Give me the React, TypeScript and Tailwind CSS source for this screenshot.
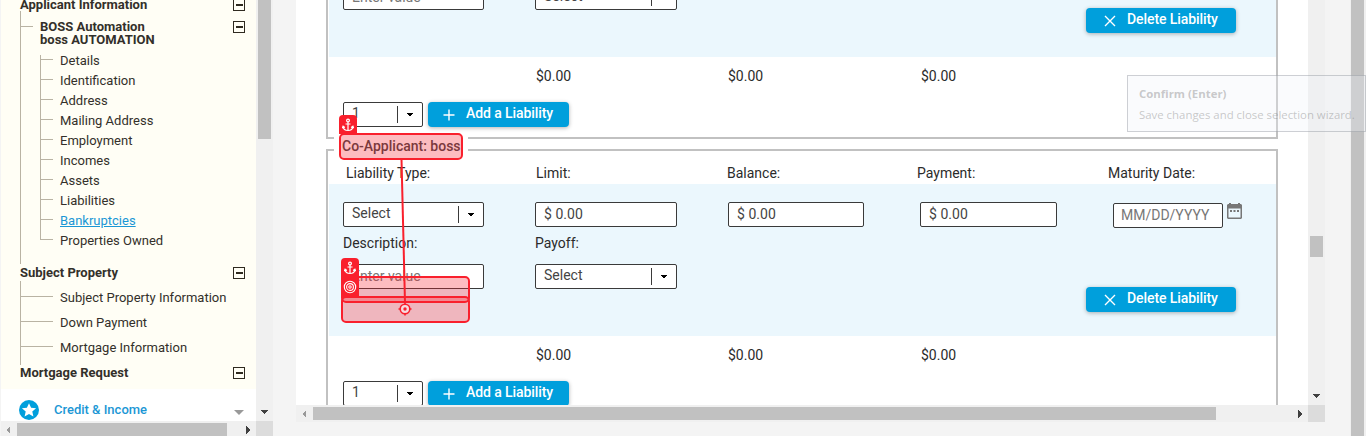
import React from "react";

const applicantLinks = [
  "Details",
  "Identification",
  "Address",
  "Mailing Address",
  "Employment",
  "Incomes",
  "Assets",
  "Liabilities",
  "Bankruptcies",
  "Properties Owned",
];

const propertyLinks = ["Subject Property Information", "Down Payment", "Mortgage Information"];

function CollapseBox() {
  return (
    <span className="flex h-3 w-3 shrink-0 items-center justify-center border border-[#2f2a20] bg-[#fffef5]">
      <span className="h-[2px] w-[7px] bg-[#2f2a20]" />
    </span>
  );
}

function Arrow({ dir, className }: { dir: "left" | "right" | "down"; className: string }) {
  const points = { left: "5,0 5,8 1,4", right: "1,0 1,8 5,4", down: "0,1 8,1 4,5" }[dir];
  const down = dir === "down";
  return (
    <svg width={down ? 8 : 6} height={down ? 6 : 8} className={"shrink-0 " + className} shapeRendering="crispEdges">
      <polygon points={points} fill="currentColor" />
    </svg>
  );
}

function Sidebar() {
  return (
    <aside className="ml-px flex h-[436px] w-[272px] shrink-0 flex-col">
      <div className="flex h-[421px]">
        <div className="flex w-[255px] flex-col bg-white text-[13px] leading-[13px] text-[#33302a]">
          <nav className="h-[389px] bg-[#fffef5] pl-[19px]">
            <div className="flex h-[11px] items-end justify-between pr-[11px] font-bold">
              <span>Applicant Information</span>
              <CollapseBox />
            </div>
            <div className="h-[253px] border-l border-[#b9b3a3]">
              <div className="flex h-[44px] justify-between pr-[11px] pt-[10px]">
                <div className="flex">
                  <span className="mt-[5px] h-px w-3 bg-[#b9b3a3]" />
                  <div className="-mt-px ml-[7px] font-bold">
                    BOSS Automation
                    <br />
                    boss AUTOMATION
                  </div>
                </div>
                <CollapseBox />
              </div>
              <div className="flex">
                <div className="ml-[19px] h-[185px] w-px bg-[#b9b3a3]" />
                <ul className="-mt-[4px]">
                  {applicantLinks.map((t) => (
                    <li key={t} className="flex h-5 items-start">
                      <span className="mt-2 h-px w-3 bg-[#b9b3a3]" />
                      <a
                        className={
                          t === "Bankruptcies"
                            ? "ml-[7px] mt-[3px] text-[#1b97d5] underline"
                            : "ml-[7px] mt-[3px]"
                        }
                      >
                        {t}
                      </a>
                    </li>
                  ))}
                </ul>
              </div>
            </div>
            <div className="flex h-[17px] items-center justify-between pr-[11px] font-bold">
              <span>Subject Property</span>
              <CollapseBox />
            </div>
            <ul className="h-[84px] border-l border-[#b9b3a3] pt-[3px]">
              {propertyLinks.map((t) => (
                <li key={t} className="flex h-[25px] items-center">
                  <span className="h-px w-8 bg-[#b9b3a3]" />
                  <a className="ml-[7px] mt-px">{t}</a>
                </li>
              ))}
            </ul>
            <div className="flex h-4 items-center justify-between pr-[11px] font-bold">
              <span className="-mt-[2px]">Mortgage Request</span>
              <CollapseBox />
            </div>
          </nav>
          <div className="flex h-8 items-center pl-[18px] pr-3 pt-[9px] font-medium text-[#1b97d5]">
            <svg width="20" height="20" viewBox="0 0 20 20">
              <circle cx="10" cy="10" r="10" fill="#009fdc" />
              <path
                d="M10 3.200l2.100 4.600 5 .5-3.800 3.300 1.100 4.900-4.400-2.600-4.400 2.600 1.100-4.900-3.800-3.300 5-.5z"
                fill="#fff"
              />
            </svg>
            <span className="ml-[15px] grow">Credit &amp; Income</span>
            <svg width="10" height="5" className="mt-[5px]">
              <polygon points="0,0 10,0 5,5" fill="#999" />
            </svg>
          </div>
        </div>
        <div className="flex w-[17px] flex-col items-start justify-between bg-[#f0f0f0]">
          <div className="ml-[2px] h-[139px] w-[13px] bg-[#c1c1c1]" />
          <Arrow dir="down" className="mb-[6px] ml-1 text-[#404040]" />
        </div>
      </div>
      <div className="flex h-[15px] bg-[#f0f0f0]">
        <div className="flex w-[255px] items-center">
          <Arrow dir="left" className="ml-1 mt-[2px] text-[#999]" />
          <div className="ml-[6px] mt-[2px] h-[13px] w-[210px] bg-[#c1c1c1]" />
          <Arrow dir="right" className="ml-[18px] mt-[2px] text-[#404040]" />
        </div>
        <div className="w-[17px] bg-[#dcdcdc]" />
      </div>
    </aside>
  );
}

function SelectBox({ value, className }: { value: string; className: string }) {
  return (
    <div className={"flex h-[25px] shrink-0 items-center rounded-[2px] border border-[#3a3a3a] bg-white text-[#444] " + className}>
      <span className="-mt-[3px] ml-2 grow">{value}</span>
      <span className="h-[17px] w-px bg-[#3a3a3a]" />
      <svg width="6" height="4" className="ml-[9px] mr-[9px] mt-px" shapeRendering="crispEdges">
        <polygon points="0,0 6,0 3,4" fill="#000" />
      </svg>
    </div>
  );
}

function MoneyBox({ className }: { className: string }) {
  return (
    <div className={"flex h-[25px] shrink-0 items-center rounded-[2px] border border-[#3a3a3a] bg-white pl-2 text-[#444] " + className}>
      <span className="-mt-[2px] tracking-[0.05px]">$ 0.00</span>
    </div>
  );
}

function BlueButton({ kind, label, className }: { kind: "plus" | "cross"; label: string; className: string }) {
  return (
    <button className={"flex h-[25px] shrink-0 items-center rounded-[4px] bg-[#009fdc] font-medium text-white shadow-[0_1px_4px_rgba(0,0,0,0.3)] " + className}>
      <svg width="12" height="12" className="mt-px shrink-0" stroke="#fff" strokeWidth="1.4">
        <path d={kind === "plus" ? "M6 .5v11M.5 6h11" : "M1 1l10 10M11 1L1 11"} />
      </svg>
      <span className="-mt-[4px] ml-[11px] whitespace-nowrap tracking-[-0.08px]">{label}</span>
    </button>
  );
}

function LiabilitySection() {
  return (
    <section className="ml-[30px] h-[269px] w-[952px] shrink-0 border-2 border-[#c1c1c1] pl-px">
      <div className="flex h-[33px] items-center pl-[17px] pt-[11px] text-[#2b2b2b]">
        <span className="w-[190px]">Liability Type:</span>
        <span className="w-[191px]">Limit:</span>
        <span className="w-[190px]">Balance:</span>
        <span className="w-[191px]">Payment:</span>
        <span>Maturity Date:</span>
      </div>
      <div className="h-[152px] bg-[#ebf7fd] pl-[14px] pt-[18px]">
        <div className="flex">
          <SelectBox value="Select" className="w-[141px]" />
          <MoneyBox className="ml-[51px] w-[142px]" />
          <MoneyBox className="ml-[51px] w-[136px]" />
          <MoneyBox className="ml-[56px] w-[137px]" />
          <div className="ml-[56px] mt-px flex h-[25px] w-[110px] items-center rounded-[2px] border border-[#3a3a3a] bg-white pl-[7px] text-[#777]">
            <span className="-mt-px">MM/DD/YYYY</span>
          </div>
          <svg width="15" height="16" viewBox="0 0 15 16" className="ml-1 mt-px">
            <path
              d="M2 0h2v1h7V0h2v1h1l1 1v13l-1 1H1l-1-1V2l1-1h1zM1.500 5.500v9h12v-9z"
              fillRule="evenodd"
              fill="#777"
            />
            <path d="M3 7h2v2H3zM6.500 7h2v2h-2zM10 7h2v2h-2z" fill="#777" />
          </svg>
        </div>
        <div className="flex h-[36px] items-center pb-[6px] text-[#2b2b2b]">
          <span className="w-[192px]">Description:</span>
          <span>Payoff:</span>
        </div>
        <div className="flex">
          <div className="flex h-[25px] w-[141px] items-center rounded-[2px] border border-[#3a3a3a] bg-white pl-2 text-[#777]">
            <span className="-mt-[2px]">Enter value</span>
          </div>
          <SelectBox value="Select" className="ml-[51px] w-[142px]" />
          <BlueButton kind="cross" label="Delete Liability" className="ml-[409px] mt-[23px] w-[150px] pl-[18px]" />
        </div>
      </div>
      <div className="flex h-[45px] items-center pb-[8px] pl-[207px] text-[#2b2b2b]">
        <span className="w-[192px]">$0.00</span>
        <span className="w-[193px]">$0.00</span>
        <span>$0.00</span>
      </div>
      <div className="flex pl-[14px]">
        <SelectBox value="1" className="w-[80px]" />
        <BlueButton kind="plus" label="Add a Liability" className="ml-[5px] w-[141px] pl-[15px]" />
      </div>
    </section>
  );
}

function AnchorBadge({ className }: { className: string }) {
  return (
    <div className={"absolute flex h-[19px] w-[18px] items-center justify-center rounded-t-[4px] bg-[#f9202d] " + className}>
      <svg width="12" height="14" viewBox="0 0 12 14" fill="none" stroke="#fff" strokeWidth="1.2">
        <circle cx="6" cy="2.500" r="1.400" />
        <path d="M6 4v8.500M3.500 6h5M1 8.500c.3 2.500 2.300 4 5 4s4.700-1.500 5-4M.3 10.200L1.100 8.200l1.800 1.200M11.700 10.200l-.8-2-1.800 1.200" />
      </svg>
    </div>
  );
}

function SelectionOverlay() {
  return (
    <>
      <div className="absolute left-[339px] top-[133px] h-[27px] w-[124px] rounded-[5px] border-2 border-[#f9202d] bg-[#f9202d]/30" />
      <div className="absolute left-[341px] top-[276px] h-[27px] w-[129px] rounded-[5px] border-2 border-[#f9202d] bg-[#f9202d]/30" />
      <div className="absolute left-[341px] top-[296px] h-[27px] w-[129px] rounded-[5px] border-2 border-[#f9202d] bg-[#f9202d]/30" />
      <AnchorBadge className="left-[339px] top-[115px]" />
      <AnchorBadge className="left-[341px] top-[258px]" />
      <div className="absolute left-[341px] top-[277px] flex h-5 w-[18px] items-center justify-center bg-[#f9202d]">
        <svg width="14" height="14" viewBox="0 0 14 14" fill="none" stroke="#fff" strokeWidth="1.1">
          <circle cx="7" cy="7" r="5.700" />
          <circle cx="7" cy="7" r="3.400" />
          <circle cx="7" cy="7" r="1.200" />
        </svg>
      </div>
      <svg width="20" height="160" className="absolute left-[395px] top-[158px]" fill="none" stroke="#f9202d">
        <path d="M6.500 1L10 145" strokeWidth="2" />
        <circle cx="10" cy="151" r="4.800" fill="#f6dbe0" strokeWidth="1.600" />
        <circle cx="10" cy="151" r="1.700" fill="#f9202d" stroke="none" />
        <path d="M10 144.500v2M10 155.500v2M3.500 151h2M14.500 151h2" strokeWidth="1.600" />
      </svg>
    </>
  );
}

export default function App() {
  return (
    <div className="relative flex h-[436px] w-[1366px] overflow-hidden bg-[#f4f4f4] font-['Roboto',sans-serif] text-sm leading-4">
      <Sidebar />
      <main className="ml-[23px] flex h-[422px] w-[1029px] shrink-0 flex-col">
        <div className="flex h-[405px]">
          <div className="flex w-[1012px] flex-col gap-[10px] overflow-hidden bg-white">
            <div className="-mt-[130px]">
              <LiabilitySection />
            </div>
            <LiabilitySection />
          </div>
          <div className="flex w-[17px] flex-col items-start bg-[#f0f0f0]">
            <div className="ml-[2px] mt-[236px] h-[21px] w-[13px] bg-[#c1c1c1]" />
            <Arrow dir="down" className="mb-[6px] ml-1 mt-auto text-[#404040]" />
          </div>
        </div>
        <div className="flex h-[17px] bg-[#f0f0f0]">
          <div className="flex w-[1012px] items-center">
            <Arrow dir="left" className="ml-[5px] text-[#999]" />
            <div className="ml-[6px] h-[13px] w-[903px] bg-[#c1c1c1]" />
            <Arrow dir="right" className="ml-auto mr-[5px] text-[#404040]" />
          </div>
          <div className="w-[17px] bg-[#dcdcdc]" />
        </div>
      </main>
      <div className="ml-auto flex w-4 bg-[#f0f0f0] pl-px">
        <div className="w-[13px] bg-[#c1c1c1]" />
      </div>

      <div className="absolute left-[334px] top-[137px] flex h-[18px] w-[134px] items-center whitespace-nowrap bg-white pl-2 font-medium text-[#444]">
        Co-Applicant: boss
      </div>
      <SelectionOverlay />
      <div className="absolute left-[1127px] top-[75px] h-[57px] w-[239px] whitespace-nowrap border border-[#787d87]/35 bg-[#eef2fa]/30 pl-[11px] pt-[10px] font-['Open_Sans',sans-serif] text-[11.4px] leading-4 text-[#787878]/40">
        <div className="font-bold">Confirm (Enter)</div>
        <div className="mt-[5px]">Save changes and close selection wizard.</div>
      </div>
    </div>
  );
}
